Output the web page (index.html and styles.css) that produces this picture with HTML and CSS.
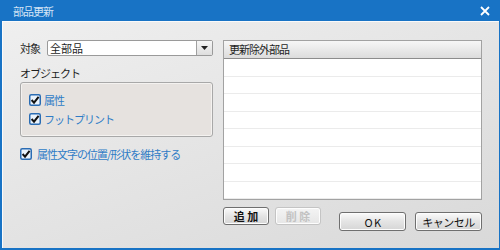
FILE: index.html
```html
<!DOCTYPE html>
<html lang="ja">
<head>
    <meta charset="UTF-8">
    <title>部品更新</title>
    <link rel="stylesheet" href="styles.css">
</head>
<body>
    <div class="dialog">
        <div class="titlebar">
            <span class="title">部品更新</span>
            <svg class="close" width="10" height="10" viewBox="0 0 10 10">
                <path d="M1 1 L9 9 M9 1 L1 9" stroke="#fff" stroke-width="1.8"/>
            </svg>
        </div>

        <div class="content">
            <div class="left">
                <div class="target-row">
                    <span class="label">対象</span>
                    <div class="combo">
                        <span class="combo-text">全部品</span>
                        <span class="combo-btn">
                            <svg width="7" height="4" viewBox="0 0 7 4"><path d="M0 0 H7 L3.5 4 Z" fill="#222"/></svg>
                        </span>
                    </div>
                </div>

                <div class="group-title">オブジェクト</div>
                <div class="group">
                    <label class="check">
                        <svg class="box" width="12" height="12" viewBox="0 0 12 12">
                            <rect x="0.75" y="0.75" width="10.5" height="10.5" rx="1.5" fill="#eaf3fc" stroke="#2a6cb3" stroke-width="1.5"/>
                            <path d="M2.6 6 L5 8.6 L9.6 2.8" fill="none" stroke="#111" stroke-width="2"/>
                        </svg>
                        <span>属性</span>
                    </label>
                    <label class="check">
                        <svg class="box" width="12" height="12" viewBox="0 0 12 12">
                            <rect x="0.75" y="0.75" width="10.5" height="10.5" rx="1.5" fill="#eaf3fc" stroke="#2a6cb3" stroke-width="1.5"/>
                            <path d="M2.6 6 L5 8.6 L9.6 2.8" fill="none" stroke="#111" stroke-width="2"/>
                        </svg>
                        <span>フットプリント</span>
                    </label>
                </div>

                <label class="check keep">
                    <svg class="box" width="12" height="12" viewBox="0 0 12 12">
                        <rect x="0.75" y="0.75" width="10.5" height="10.5" rx="1.5" fill="#eaf3fc" stroke="#2a6cb3" stroke-width="1.5"/>
                        <path d="M2.6 6 L5 8.6 L9.6 2.8" fill="none" stroke="#111" stroke-width="2"/>
                    </svg>
                    <span>属性文字の位置/形状を維持する</span>
                </label>
            </div>

            <div class="right">
                <div class="list">
                    <div class="list-header">更新除外部品</div>
                    <div class="row"></div>
                    <div class="row"></div>
                    <div class="row"></div>
                    <div class="row"></div>
                    <div class="row"></div>
                    <div class="row"></div>
                    <div class="row"></div>
                    <div class="row"></div>
                </div>

                <div class="buttons">
                    <div class="btn-group">
                        <button class="btn small">追 加</button>
                        <button class="btn small" disabled>削 除</button>
                    </div>
                    <div class="btn-group main">
                        <button class="btn wide">O K</button>
                        <button class="btn wide">キャンセル</button>
                    </div>
                </div>
            </div>
        </div>
    </div>
</body>
</html>
```

FILE: styles.css
```css
:root {
    --color-title: #1873c5;
    --color-link: #2f7cc6;
    --color-text: #1e1e1e;
    --color-border: #8e8e8e;
}

* {
    margin: 0;
    padding: 0;
    box-sizing: border-box;
}

body {
    font-family: "Noto Sans CJK JP", "Noto Sans", sans-serif;
    font-size: 11px;
    letter-spacing: -1px;
    color: var(--color-text);
    width: 500px;
    height: 250px;
    overflow: hidden;
}

.dialog {
    width: 500px;
    height: 250px;
    display: flex;
    flex-direction: column;
}

.titlebar {
    height: 21px;
    background: var(--color-title);
    display: flex;
    align-items: center;
    justify-content: space-between;
    padding: 0 10px 0 13px;
}

.title {
    color: #d3e4f5;
    font-size: 11px;
}

.content {
    flex: 1;
    display: flex;
    gap: 10px;
    padding: 19px 17px 0 18px;
    border-left: 2px solid var(--color-title);
    border-right: 1px solid var(--color-title);
    border-bottom: 2px solid var(--color-title);
    background: linear-gradient(160deg, #efefef 0%, #e3e3e3 55%, #d9d9d9 100%);
    box-shadow: inset 1px 1px 0 #fafafa;
}

.left {
    width: 193px;
    display: flex;
    flex-direction: column;
}

.target-row {
    display: flex;
    align-items: center;
    gap: 7px;
    height: 16px;
}

.label {
    font-size: 11px;
}

.combo {
    flex: 1;
    height: 16px;
    display: flex;
    align-items: stretch;
    background: #fff;
    border: 1px solid #9a9a9a;
    border-radius: 2px;
}

.combo-text {
    flex: 1;
    font-size: 11px;
    letter-spacing: 0;
    line-height: 14px;
    padding-left: 2px;
}

.combo-btn {
    width: 16px;
    display: flex;
    align-items: center;
    justify-content: center;
    border-left: 1px solid #a0a0a0;
    background: linear-gradient(#f6f6f6, #dedede);
}

.group-title {
    font-size: 11px;
    margin-top: 8px;
    line-height: 18px;
    height: 18px;
}

.group {
    height: 55px;
    border: 1px solid #a8a8a8;
    border-radius: 3px;
    background: #e6e2df;
    box-shadow: inset 0 0 0 1px #f4f2f0;
    padding: 10px 0 0 8px;
    display: flex;
    flex-direction: column;
    gap: 5px;
}

.check {
    display: flex;
    align-items: center;
    gap: 3px;
    color: var(--color-link);
    font-size: 11px;
    line-height: 14px;
}

.keep {
    margin-top: 10px;
    gap: 5px;
}

.right {
    flex: 1;
    display: flex;
    flex-direction: column;
}

.list {
    height: 160px;
    background: #fff;
    border: 1px solid #a2a2a2;
    overflow: hidden;
}

.list-header {
    height: 18px;
    line-height: 17px;
    padding-left: 5px;
    font-size: 11px;
    background: linear-gradient(#f7f7f7, #dcdcdc);
    border-bottom: 1px solid #8c8c8c;
}

.row {
    height: 17.5px;
    border-bottom: 1px solid #ebebeb;
}

.buttons {
    display: flex;
    justify-content: space-between;
    align-items: flex-start;
    margin-top: 7px;
}

.btn-group {
    display: flex;
    gap: 6px;
}

.btn-group.main {
    margin-top: 5px;
    gap: 9px;
}

.btn {
    font-family: inherit;
    font-size: 11px;
    letter-spacing: 0;
    color: #111;
    height: 18px;
    border: 1px solid #6f6f6f;
    border-radius: 3px;
    background: linear-gradient(#fbfbfb, #e4e4e4 50%, #d6d6d6);
    box-shadow: inset 0 0 0 1px #fdfdfd;
    line-height: 14px;
}

.btn.small {
    width: 46px;
    font-weight: bold;
}

.btn.wide {
    width: 67px;
    height: 19px;
    letter-spacing: -0.5px;
}

.btn:disabled {
    color: #c2c2c2;
    border-color: #c4c4c4;
    background: linear-gradient(#f4f4f4, #e6e6e6);
}
```
